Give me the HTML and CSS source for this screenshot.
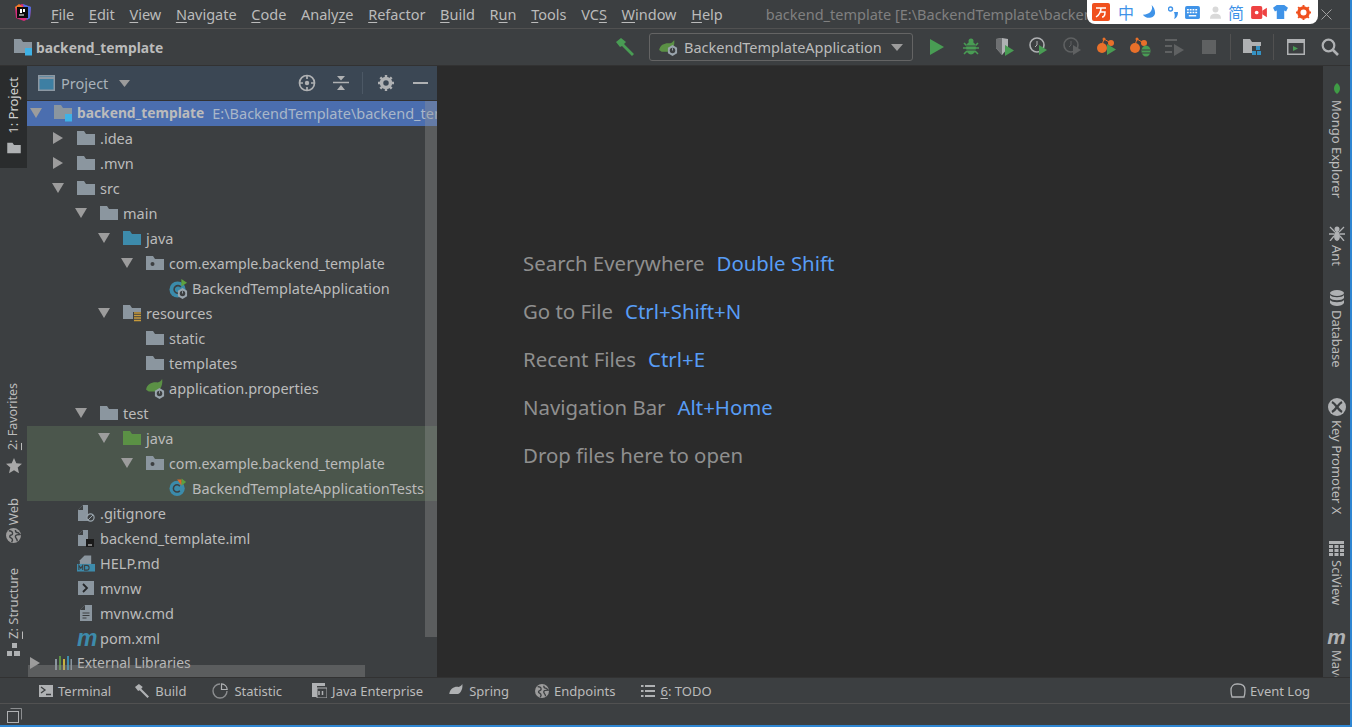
FILE: index.html
```html
<!DOCTYPE html>
<html lang="en">
<head>
<meta charset="utf-8">
<title>backend_template</title>
<link rel="stylesheet" href="styles.css">
</head>
<body>
<svg class="defs" width="0" height="0" aria-hidden="true">
  <symbol id="folder" viewBox="0 0 18 16"><path d="M0 1h7l2 3h9v11H0z" fill="#8b969f"/></symbol>
  <symbol id="proj" viewBox="0 0 18 18"><path d="M0 1h7l2 3h9v11H0z" fill="#8b969f"/><rect x="11" y="10" width="7.500" height="7.500" fill="#3fb2e6"/></symbol>
  <symbol id="src" viewBox="0 0 18 16"><path d="M0 1h7l2 3h9v11H0z" fill="#3d8bab"/></symbol>
  <symbol id="test" viewBox="0 0 18 16"><path d="M0 1h7l2 3h9v11H0z" fill="#5b9145"/></symbol>
  <symbol id="pkg" viewBox="0 0 18 16"><path d="M0 1h7l2 3h9v11H0z" fill="#8b969f"/><circle cx="6.500" cy="9" r="2" fill="#3c3f41"/></symbol>
  <symbol id="res" viewBox="0 0 18 18"><path d="M0 1h7l2 3h9v11H0z" fill="#8b969f"/><rect x="10" y="8" width="9" height="9" fill="#3c3f41"/><path d="M11 9h7M11 11.500h7M11 14h7M11 16.500h7" stroke="#c79a3b" stroke-width="1.500"/></symbol>
  <symbol id="cls" viewBox="0 0 20 20"><circle cx="9" cy="11" r="8.500" fill="#3b8bab"/><path d="M12.500 8.500a4 4 0 1 0 0 5" fill="none" stroke="#3c3f41" stroke-width="1.700"/><path d="M13 0l6 4-6 4z" fill="#5da13f"/></symbol>
  <symbol id="clsrun" viewBox="0 0 20 20"><circle cx="9" cy="11" r="8.500" fill="#3b8bab"/><path d="M12 8.500a4 4 0 1 0 0 5" fill="none" stroke="#3c3f41" stroke-width="1.700"/><path d="M9 1l5 0 0 7z" fill="#d9682a"/><path d="M14 0l5 4-5 4z" fill="#5da13f"/></symbol>
  <symbol id="gear" viewBox="0 0 12 12"><path d="M6 0l5 3v6l-5 3-5-3V3z" fill="#9aa5ad"/><circle cx="6" cy="6" r="3" fill="#3c3f41"/><path d="M6 3.500V6" stroke="#9aa5ad"/></symbol>
  <symbol id="spring" viewBox="0 0 20 18"><path d="M0 12C1 5 8 3 13 4c2-.5 3.500-1.500 5-4 1 5-1 12-6 14H3z" fill="#5b9145"/></symbol>
  <symbol id="file" viewBox="0 0 14 18"><path d="M1 6l5-5h5v16H1z" fill="#8b969f"/><path d="M6 1v5H1z" fill="#3c3f41"/></symbol>
  <symbol id="tri" viewBox="0 0 12 10"><path d="M0 0h12L6 10z" fill="#9c9c9c"/></symbol>
  <symbol id="trir" viewBox="0 0 10 12"><path d="M0 0v12l10-6z" fill="#9c9c9c"/></symbol>
  <symbol id="play" viewBox="0 0 14 16"><path d="M0 0v16l14-8z" fill="#499c54"/></symbol>
  <symbol id="bug" viewBox="0 0 16 18"><ellipse cx="8" cy="10" rx="5" ry="6.500" fill="#499c54"/><circle cx="8" cy="3" r="2.500" fill="#499c54"/><path d="M1 5l3 3M15 5l-3 3M0 10h3M16 10h-3M1 16l3-3M15 16l-3-3" stroke="#499c54" stroke-width="1.600"/><path d="M3 8h10M3 12h10" stroke="#3c3f41"/></symbol>
  <symbol id="orange" viewBox="0 0 20 20"><circle cx="5" cy="11" r="5" fill="#e8702a"/><circle cx="7" cy="2" r="1.500" fill="#e8702a"/><circle cx="14" cy="6" r="3" fill="#e8702a"/><path d="M7 2L5 8M7 2l5 3" stroke="#e8702a"/></symbol>
  <symbol id="hammer" viewBox="0 0 20 18"><path d="M1 4l5-4 5 4-2 2 10 10-2 2L7 8 5 9z" fill="currentColor"/></symbol>
  <symbol id="globe" viewBox="0 0 16 16"><circle cx="8" cy="8" r="8" fill="#9c9c9c"/><path d="M3 3c3 0 4 1 4 3S4 7 4 9s3 1 3 4l-1 2M10 2c0 2 1 3 3 3l2 2c-3 0-5 0-5 2s2 2 2 5" fill="none" stroke="#3c3f41" stroke-width="1.500"/></symbol>
  <symbol id="star" viewBox="0 0 16 16"><path d="M8 0l2.300 5.300 5.700.5-4.300 3.800 1.300 5.700L8 12.300 3 15.300l1.300-5.700L0 5.800l5.700-.5z" fill="#a8a8a8"/></symbol>
</svg>

<div class="window">
  <header class="menubar">
    <svg class="logo" width="17" height="17" viewBox="0 0 17 17"><path d="M1 3L8 0l9 3-1 11-6 3-8-3z" fill="#d82c7c"/><path d="M9 0l8 3-1 11-3 2z" fill="#4a6fe0"/><path d="M1 3l4-3 4 3-5 5z" fill="#f07a2a"/><rect x="3" y="3" width="11" height="11" fill="#0c0c0c"/><path d="M5 11h5" stroke="#fff"/><path d="M6 5h2v4H6zM9 5h2v3H9z" fill="#fff"/></svg>
    <nav class="menu">
      <span><u>F</u>ile</span><span><u>E</u>dit</span><span><u>V</u>iew</span><span><u>N</u>avigate</span><span><u>C</u>ode</span><span>Analy<u>z</u>e</span><span><u>R</u>efactor</span><span><u>B</u>uild</span><span>R<u>u</u>n</span><span><u>T</u>ools</span><span>VC<u>S</u></span><span><u>W</u>indow</span><span><u>H</u>elp</span>
    </nav>
    <span class="wintitle">backend_template [E:\BackendTemplate\backend_template] - IntelliJ IDEA</span>
    <svg class="closex" width="11" height="11" viewBox="0 0 11 11"><path d="M.5.500l10 10M10.500.500l-10 10" stroke="#a0a0a0"/></svg>
  </header>

  <div class="ime">
    <svg width="18" height="18" viewBox="0 0 18 18"><rect width="18" height="18" rx="2" fill="#f0501e"/><path d="M4 5h10M9 5c0 4-2 7-5 9M8 9h5c0 3-1 5-3 5" fill="none" stroke="#fff" stroke-width="1.500"/></svg>
    <span class="ime-ch zh">中</span>
    <svg class="i-moon" width="14" height="14" viewBox="0 0 16 16"><path d="M11 0c2 6-2 11-10 11 3 5 13 5 14-2 0-4-2-7-4-9z" fill="#3f93e8"/></svg>
    <svg class="i-dot" width="10" height="13" viewBox="0 0 10 13"><circle cx="2.500" cy="3" r="2" fill="none" stroke="#3f93e8" stroke-width="1.400"/><path d="M6 6h4c0 3-1 6-4 7 1-2 1-4 0-7z" fill="#3f93e8"/></svg>
    <svg class="i-kb" width="15" height="13" viewBox="0 0 16 14"><rect width="16" height="14" rx="2" fill="#3f93e8"/><path d="M2 4h12M2 7h12" stroke="#fff" stroke-width="1.500" stroke-dasharray="2 1"/><path d="M4 10.500h8" stroke="#fff" stroke-width="1.500"/></svg>
    <svg class="i-usr" width="11" height="13" viewBox="0 0 13 15"><circle cx="6.500" cy="4" r="3.500" fill="#d9d9d9"/><path d="M0 15c0-5 3-6 6.500-6s6.500 1 6.500 6z" fill="#d9d9d9"/></svg>
    <span class="ime-ch jian">简</span>
    <svg class="i-vid" width="16" height="13" viewBox="0 0 17 14"><rect width="12" height="14" rx="2" fill="#ee4242"/><path d="M12 5l5-3v10l-5-3z" fill="#ee4242"/><circle cx="6" cy="7" r="2" fill="#fff"/></svg>
    <svg class="i-shirt" width="15" height="14" viewBox="0 0 16 15"><path d="M4 0h8l4 3-2 4-2-1v9H4V6L2 7 0 3z" fill="#3f93e8"/></svg>
    <svg class="i-gear" width="15" height="15" viewBox="0 0 16 16"><circle cx="8" cy="8" r="5" fill="none" stroke="#f0501e" stroke-width="3.500"/><path d="M8 0v3M8 13v3M0 8h3M13 8h3M2.300 2.300l2 2M11.700 11.700l2 2M13.700 2.300l-2 2M4.300 11.700l-2 2" stroke="#f0501e" stroke-width="2"/></svg>
  </div>

  <div class="navbar">
    <div class="crumb">
      <svg class="ic18" width="18" height="18"><use href="#proj"/></svg>
      <b>backend_template</b>
    </div>
    <div class="tools">
      <svg class="hammer" width="20" height="18"><use href="#hammer"/></svg>
      <div class="combo">
        <span class="combo-ic"><svg width="17" height="15"><use href="#spring"/></svg><svg class="combo-gear" width="11" height="11"><use href="#gear"/></svg></span>
        <span class="combo-t">BackendTemplateApplication</span>
        <svg class="combo-a" width="12" height="7" viewBox="0 0 12 10" preserveAspectRatio="none"><use href="#tri"/></svg>
      </div>
      <span class="tb"><svg width="14" height="16"><use href="#play"/></svg></span>
      <span class="tb"><svg width="16" height="18"><use href="#bug"/></svg></span>
      <span class="tb"><svg width="20" height="18" viewBox="0 0 20 18"><path d="M1 1l6-1 6 1v9l-6 7-6-7z" fill="#afb1b3"/><path d="M7 0v17l-6-7V1z" fill="#6e7072"/><path d="M10 7v11l9-5.500z" fill="#499c54"/></svg></span>
      <span class="tb"><svg width="20" height="20" viewBox="0 0 20 20"><circle cx="8" cy="8" r="7" fill="none" stroke="#afb1b3" stroke-width="1.600"/><path d="M8 4v4l-2 2" fill="none" stroke="#afb1b3"/><path d="M10 8v10l8-5z" fill="#499c54"/></svg></span>
      <span class="tb"><svg width="20" height="20" viewBox="0 0 20 20"><circle cx="8" cy="8" r="7" fill="none" stroke="#5f6162" stroke-width="1.600"/><path d="M8 4v4l-2 2" fill="none" stroke="#5f6162"/><path d="M10 8v10l8-5z" fill="#5f6162"/></svg></span>
      <span class="tb"><svg width="20" height="20" viewBox="0 0 20 20"><use href="#orange"/><path d="M10 7v11l9-5.500z" fill="#499c54"/></svg></span>
      <span class="tb"><svg width="22" height="20" viewBox="0 0 22 20"><use href="#orange" width="20" height="20"/><ellipse cx="16" cy="14" rx="4.500" ry="5.500" fill="#499c54"/><path d="M12 13h8M12 16h8" stroke="#3c3f41"/></svg></span>
      <span class="tb"><svg width="20" height="18" viewBox="0 0 20 18"><path d="M0 2h12M0 8h7M0 14h7" stroke="#5f6162" stroke-width="2"/><path d="M9 6v12l10-6z" fill="#5f6162"/></svg></span>
      <span class="tb"><span class="stop"></span></span>
      <span class="sep sep1"></span>
      <span class="tb2"><svg width="18" height="18" viewBox="0 0 18 18"><path d="M0 1h7l2 3h9v11H0z" fill="#afb1b3"/><rect x="9" y="8" width="10" height="10" fill="#3c3f41"/><rect x="13" y="8" width="4" height="4" fill="#3592c4"/><rect x="9" y="13" width="4" height="4" fill="#3592c4"/><rect x="14" y="13" width="4" height="4" fill="#3592c4"/></svg></span>
      <span class="sep sep2"></span>
      <span class="tb3"><svg width="18" height="16" viewBox="0 0 18 16"><path d="M.750.750h16.500v14.500H.750z" fill="none" stroke="#afb1b3" stroke-width="1.500"/><path d="M1 1h16v3H1z" fill="#afb1b3"/><path d="M6 7v5l5-2.500z" fill="#499c54"/></svg></span>
      <span class="tb3"><svg width="18" height="18" viewBox="0 0 18 18"><circle cx="7.500" cy="7.500" r="5.800" fill="none" stroke="#afb1b3" stroke-width="2.200"/><path d="M11.500 11.500l5.500 5.500" stroke="#afb1b3" stroke-width="2.600"/></svg></span>
    </div>
  </div>

  <div class="main">
    <aside class="stripe-l">
      <div class="sl-active">
        <span class="vt-up">1: Project</span>
        <svg width="14" height="12" viewBox="0 0 18 16"><path d="M0 1h7l2 3h9v11H0z" fill="#afb1b3"/></svg>
      </div>
      <div class="sl fav"><span class="vt-up"><u>2</u>: Favorites</span><svg width="16" height="16"><use href="#star"/></svg></div>
      <div class="sl web"><span class="vt-up">Web</span><svg width="15" height="15" viewBox="0 0 16 16"><use href="#globe"/></svg></div>
      <div class="sl str"><span class="vt-up"><u>Z</u>: Structure</span><svg width="14" height="14" viewBox="0 0 14 14"><path d="M5 0h5v5H5zM0 8h5v5H0zM7 8h6v5H7z" fill="#afb1b3"/></svg></div>
    </aside>

    <section class="project">
      <div class="phead">
        <svg class="pwin" width="17" height="16" viewBox="0 0 17 16"><rect x=".75" y=".75" width="15.500" height="14.500" fill="#3d7fa3" stroke="#8c98a3" stroke-width="1.500"/><path d="M1 3h15" stroke="#8c98a3" stroke-width="2"/></svg>
        <span class="ptitle">Project</span>
        <svg class="parrow" width="11" height="7" viewBox="0 0 12 10" preserveAspectRatio="none"><use href="#tri"/></svg>
        <div class="pacts">
          <svg width="18" height="18" viewBox="0 0 18 18"><circle cx="9" cy="9" r="7.500" fill="none" stroke="#afb1b3" stroke-width="1.700"/><circle cx="9" cy="9" r="2.200" fill="#afb1b3"/><path d="M9 1v4M9 13v4M1 9h4M13 9h4" stroke="#afb1b3" stroke-width="1.700"/></svg>
          <svg class="pa2" width="16" height="16" viewBox="0 0 16 16"><path d="M0 7.500h16" stroke="#afb1b3" stroke-width="1.500"/><path d="M4 1h8L8 5.500zM4 15h8l-4-5z" fill="#afb1b3"/></svg>
          <span class="psep"></span>
          <svg class="pa3" width="16" height="16" viewBox="0 0 16 16"><circle cx="8" cy="8" r="4.500" fill="none" stroke="#afb1b3" stroke-width="3.500"/><path d="M8 0v3M8 13v3M0 8h3M13 8h3M2.300 2.300l2 2M11.700 11.700l2 2M13.700 2.300l-2 2M4.300 11.700l-2 2" stroke="#afb1b3" stroke-width="2.400"/></svg>
          <span class="pmin"></span>
        </div>
      </div>

      <div class="tree">
        <div class="row sel l0"><svg class="ar" width="12" height="10"><use href="#tri"/></svg><svg class="ic" width="18" height="18"><use href="#proj"/></svg><b>backend_template</b><span class="path">E:\BackendTemplate\backend_template</span></div>
        <div class="row l1"><svg class="arr" width="10" height="12"><use href="#trir"/></svg><svg class="ic" width="18" height="16"><use href="#folder"/></svg><span>.idea</span></div>
        <div class="row l1"><svg class="arr" width="10" height="12"><use href="#trir"/></svg><svg class="ic" width="18" height="16"><use href="#folder"/></svg><span>.mvn</span></div>
        <div class="row l1"><svg class="ar" width="12" height="10"><use href="#tri"/></svg><svg class="ic" width="18" height="16"><use href="#folder"/></svg><span>src</span></div>
        <div class="row l2"><svg class="ar" width="12" height="10"><use href="#tri"/></svg><svg class="ic" width="18" height="16"><use href="#folder"/></svg><span>main</span></div>
        <div class="row l3"><svg class="ar" width="12" height="10"><use href="#tri"/></svg><svg class="ic" width="18" height="16"><use href="#src"/></svg><span>java</span></div>
        <div class="row l4"><svg class="ar" width="12" height="10"><use href="#tri"/></svg><svg class="ic" width="18" height="16"><use href="#pkg"/></svg><span class="pk">com.example.backend_template</span></div>
        <div class="row l5"><span class="ic stack"><svg width="19" height="19"><use href="#cls"/></svg><svg class="bgear" width="11" height="11"><use href="#gear"/></svg></span><span>BackendTemplateApplication</span></div>
        <div class="row l3"><svg class="ar" width="12" height="10"><use href="#tri"/></svg><svg class="ic" width="18" height="18"><use href="#res"/></svg><span>resources</span></div>
        <div class="row l4n"><svg class="ic" width="18" height="16"><use href="#folder"/></svg><span>static</span></div>
        <div class="row l4n"><svg class="ic" width="18" height="16"><use href="#folder"/></svg><span>templates</span></div>
        <div class="row l4n"><span class="ic stack"><svg width="18" height="16"><use href="#spring"/></svg><svg class="bgear" width="11" height="11"><use href="#gear"/></svg></span><span>application.properties</span></div>
        <div class="row l2"><svg class="ar" width="12" height="10"><use href="#tri"/></svg><svg class="ic" width="18" height="16"><use href="#folder"/></svg><span>test</span></div>
        <div class="row l3 tst"><svg class="ar" width="12" height="10"><use href="#tri"/></svg><svg class="ic" width="18" height="16"><use href="#test"/></svg><span>java</span></div>
        <div class="row l4 tst"><svg class="ar" width="12" height="10"><use href="#tri"/></svg><svg class="ic" width="18" height="16"><use href="#pkg"/></svg><span class="pk">com.example.backend_template</span></div>
        <div class="row l5 tst"><svg class="ic" width="19" height="19"><use href="#clsrun"/></svg><span>BackendTemplateApplicationTests</span></div>
        <div class="row l2f"><span class="ic stack"><svg width="14" height="18"><use href="#file"/></svg><svg class="bno" width="9" height="9" viewBox="0 0 9 9"><circle cx="4.500" cy="4.500" r="3.600" fill="#3c3f41" stroke="#9aa5ad" stroke-width="1.200"/><path d="M2 7l5-5" stroke="#9aa5ad"/></svg></span><span>.gitignore</span></div>
        <div class="row l2f"><span class="ic stack"><svg width="14" height="18"><use href="#file"/></svg><svg class="bim" width="8" height="8" viewBox="0 0 8 8"><rect width="8" height="8" fill="#1a1a1a"/><path d="M2 6h4" stroke="#ddd"/></svg></span><span>backend_template.iml</span></div>
        <div class="row l2f"><svg class="ic" width="19" height="18" viewBox="0 0 19 18"><path d="M3 6l5-5h7v9H3z" fill="#8b969f"/><rect y="10" width="19" height="8" fill="#3d8bab"/><path d="M2 16.500v-5l2 3 2-3v5M8 11.500v5h2.500c3 0 3-5 0-5z" fill="none" stroke="#3c3f41" stroke-width="1.100"/></svg><span>HELP.md</span></div>
        <div class="row l2f"><svg class="ic" width="16" height="14" viewBox="0 0 16 14"><rect width="16" height="14" fill="#8b969f"/><path d="M5 3l4 4-4 4" fill="none" stroke="#26282a" stroke-width="1.800"/></svg><span>mvnw</span></div>
        <div class="row l2f"><svg class="ic" width="14" height="18" viewBox="0 0 14 18"><path d="M1 6l5-5h7v16H1z" fill="#8b969f"/><path d="M6 1v5H1z" fill="#3c3f41"/><path d="M3.500 9h7M3.500 11.500h7M3.500 14h4" stroke="#3c3f41"/></svg><span>mvnw.cmd</span></div>
        <div class="row l2f"><span class="ic mvn">m</span><span>pom.xml</span></div>
        <div class="row l0"><svg class="arr0" width="10" height="12"><use href="#trir"/></svg><svg class="ic" width="18" height="14" viewBox="0 0 18 14"><path d="M1 3h2v11H1z" fill="#8b969f"/><path d="M5 0h2v14H5z" fill="#5b9145"/><path d="M9 3h2v11H9z" fill="#c7b23f"/><path d="M13 0h2v14h-2z" fill="#3d8bab"/><path d="M16.500 3h1.500v11h-1.500z" fill="#8b969f"/></svg><span class="ext">External Libraries</span></div>
      </div>
      <div class="vthumb"></div>
      <div class="hthumb"></div>
    </section>

    <main class="editor">
      <p>Search Everywhere<em>Double Shift</em></p>
      <p>Go to File<em>Ctrl+Shift+N</em></p>
      <p>Recent Files<em>Ctrl+E</em></p>
      <p>Navigation Bar<em>Alt+Home</em></p>
      <p>Drop files here to open</p>
    </main>

    <aside class="stripe-r">
      <div class="sr mongo"><svg width="8" height="11" viewBox="0 0 8 11"><path d="M4 0c4 3 4 8 0 11C0 8 0 3 4 0z" fill="#3f9c45"/></svg><span>Mongo Explorer</span></div>
      <div class="sr ant"><svg width="16" height="15" viewBox="0 0 16 15"><circle cx="8" cy="3" r="2.500" fill="#afb1b3"/><ellipse cx="8" cy="10" rx="3" ry="5" fill="#afb1b3"/><path d="M1 1l5 5M15 1l-5 5M0 8h5M16 8h-5M1 15l4-5M15 15l-4-5" stroke="#afb1b3" stroke-width="1.300"/></svg><span>Ant</span></div>
      <div class="sr db"><svg width="14" height="16" viewBox="0 0 14 16"><ellipse cx="7" cy="3" rx="7" ry="3" fill="#afb1b3"/><path d="M0 5c2 3 12 3 14 0v3c-2 3-12 3-14 0zM0 10c2 3 12 3 14 0v3c-2 4-12 4-14 0z" fill="#afb1b3"/></svg><span>Database</span></div>
      <div class="sr kpx"><svg width="18" height="18" viewBox="0 0 18 18"><circle cx="9" cy="9" r="9" fill="#afb1b3"/><path d="M4 4c4 2 6 8 10 10M14 4c-4 2-6 8-10 10" fill="none" stroke="#3c3f41" stroke-width="2.400"/></svg><span>Key Promoter X</span></div>
      <div class="sr sci"><svg width="15" height="15" viewBox="0 0 15 15"><path d="M0 0h15v3H0zM0 4h4v3H0zM5.500 4h4v3h-4zM11 4h4v3h-4zM0 8h4v3H0zM5.500 8h4v3h-4zM11 8h4v3h-4zM0 12h4v3H0zM5.500 12h4v3h-4zM11 12h4v3h-4z" fill="#afb1b3"/></svg><span>SciView</span></div>
      <div class="sr mav"><i>m</i><span>Maven</span></div>
    </aside>
  </div>

  <footer class="bottom">
    <span class="bt b-term"><svg width="14" height="12" viewBox="0 0 14 12"><rect width="14" height="12" fill="#afb1b3"/><path d="M2 2l4 3-4 3M7 9.500h5" fill="none" stroke="#3c3f41" stroke-width="1.300"/></svg>Terminal</span>
    <span class="bt"><svg class="bham" width="16" height="14"><use href="#hammer"/></svg>Build</span>
    <span class="bt b-stat"><svg width="16" height="16" viewBox="0 0 16 16"><path d="M8 1a7 7 0 1 0 7 7" fill="none" stroke="#8c8e90" stroke-width="1.400"/><path d="M9.500.800a6 6 0 0 1 5.700 5.700H9.500z" fill="none" stroke="#afb1b3" stroke-width="1.200"/></svg>Statistic</span>
    <span class="bt"><svg width="15" height="15" viewBox="0 0 15 15"><path d="M0 0h13v3H0zM0 3h5v11H0z" fill="#afb1b3"/><rect x="5" y="5" width="10" height="10" fill="#3c3f41" stroke="#afb1b3"/><path d="M7 8v4M10.500 8v4" stroke="#afb1b3" stroke-width="1.500"/></svg>Java Enterprise</span>
    <span class="bt"><svg width="15" height="13" viewBox="0 0 20 18"><path d="M0 14C1 5 8 3 13 4c2-.5 3.500-1.500 5-4 1 5-1 12-6 14H3z" fill="#afb1b3"/></svg>Spring</span>
    <span class="bt"><svg width="14" height="14" viewBox="0 0 16 16"><use href="#globe"/></svg>Endpoints</span>
    <span class="bt"><svg width="14" height="12" viewBox="0 0 14 12"><path d="M0 1h2.500M4 1h10M0 6h2.500M4 6h10M0 11h2.500M4 11h10" stroke="#afb1b3" stroke-width="2"/></svg><span><u>6</u>: TODO</span></span>
    <span class="bt evlog"><svg width="16" height="15" viewBox="0 0 16 15"><path d="M8 1c5 0 7 3 7 6 0 4-1 7-1 7H2s-1-3-1-7c0-3 2-6 6-6z" fill="none" stroke="#afb1b3" stroke-width="1.300"/></svg>Event Log</span>
  </footer>

  <div class="status">
    <svg width="15" height="15" viewBox="0 0 15 15"><path d="M3.500.500h11v11" fill="none" stroke="#8c8e90"/><rect x=".500" y="3.500" width="11" height="11" fill="none" stroke="#afb1b3"/></svg>
  </div>
</div>
</body>
</html>
```
FILE: styles.css
```css
* { box-sizing: border-box; }
html, body { margin: 0; height: 100%; overflow: hidden; }
body { background: #3c3f41; font-family: "Noto Sans", "Open Sans", sans-serif; color: #bbbbbb; }
.defs { position: absolute; }
svg { display: block; flex: none; }
u { text-underline-offset: 2px; }

.window { position: relative; width: 1352px; height: 727px; display: flex; flex-direction: column; border-right: 2px solid #2f86d2; border-bottom: 2px solid #2f86d2; overflow: hidden; }

.menubar { height: 29px; flex: none; display: flex; align-items: center; padding-left: 14px; font-size: 14.500px; border-bottom: 1px solid #515151; white-space: nowrap; position: relative; }
.logo { margin-top: -4px; }
.menu { display: flex; gap: 14.670px; margin-left: 20px; }
.wintitle { margin-left: 43px; color: #808080; }
.closex { position: absolute; right: 18px; top: 9px; }

.ime { position: absolute; left: 1087px; top: 0; width: 231px; height: 24px; background: #fff; border-radius: 0 0 8px 8px; display: flex; align-items: center; padding-left: 5px; }
.ime-ch { color: #3f93e8; font-size: 16px; font-family: "Noto Sans CJK SC", sans-serif; line-height: 16px; }
.zh { margin-left: 8px; }
.i-moon { margin-left: 8px; }
.i-dot { margin-left: 12px; }
.i-kb { margin-left: 7px; }
.i-usr { margin-left: 10px; }
.jian { margin-left: 7px; }
.i-vid { margin-left: 7px; }
.i-shirt { margin-left: 6px; }
.i-gear { margin-left: 8px; }

.navbar { height: 37px; flex: none; display: flex; align-items: center; padding-left: 14px; border-bottom: 1px solid #323232; }
.crumb { display: flex; align-items: center; gap: 4px; font-size: 13.800px; }
.crumb b { font-weight: 700; color: #bbbbbb; }
.tools { margin-left: auto; display: flex; align-items: center; padding-right: 3px; }
.hammer { color: #499c54; margin-right: 14px; }
.combo { width: 264px; height: 28px; border: 1px solid #646464; border-radius: 3px; display: flex; align-items: center; padding-left: 9px; margin-right: 7px; font-size: 14.500px; }
.combo-ic { position: relative; width: 25px; height: 15px; }
.combo-gear { position: absolute; left: 8px; top: 5px; }
.combo-a { margin-left: auto; margin-right: 9px; }
.tb { width: 34px; display: flex; justify-content: center; }
.tb2 { width: 42px; display: flex; justify-content: center; }
.tb3 { width: 34px; display: flex; justify-content: center; }
.stop { width: 14px; height: 14px; background: #5f6162; }
.sep { width: 1px; height: 26px; background: #515151; }
.sep1 { margin-left: 4px; }
.sep2 { margin-right: 5px; }

.main { flex: 1; min-height: 0; display: flex; }

.stripe-l { width: 27px; flex: none; display: flex; flex-direction: column; align-items: center; font-size: 13px; background: #3c3f41; }
.vt-up { writing-mode: vertical-rl; transform: rotate(180deg); white-space: nowrap; margin-right: 2px; }
.sl-active { width: 27px; height: 102px; background: #2a2c2d; color: #d0d0d0; display: flex; flex-direction: column; align-items: center; gap: 8px; padding-top: 11px; }
.sl { display: flex; flex-direction: column; align-items: center; gap: 8px; }
.fav { margin-top: 215px; }
.fav .vt-up { font-size: 12.500px; }
.web { margin-top: 24px; gap: 3px; }
.str { margin-top: 25px; gap: 4px; }

.project { width: 410px; flex: none; position: relative; overflow: hidden; background: #3c3f41; }
.phead { height: 35px; background: #3b4754; border-bottom: 1px solid #323232; display: flex; align-items: center; padding-left: 11px; font-size: 14.500px; }
.pwin { margin-right: 6px; }
.ptitle { color: #a9b2ba; }
.parrow { margin-left: 11px; }
.pacts { margin-left: auto; display: flex; align-items: center; padding-right: 9px; }
.pa2 { margin-left: 17px; }
.psep { width: 1px; height: 22px; background: #4c5865; margin-left: 13px; }
.pa3 { margin-left: 15px; }
.pmin { width: 15px; height: 2px; background: #afb1b3; margin-left: 19px; }

.tree { font-size: 14.500px; white-space: nowrap; }
.row { height: 25px; display: flex; align-items: center; position: relative; padding-bottom: 2px; }
.row b { font-size: 13.800px; }
.pk { font-size: 14.200px; padding-top: 2px; }
.ext { font-size: 13.900px; }
.ar { margin-right: 13px; }
.l0 .ar { margin-right: 12px; }
.arr { margin-right: 14px; margin-left: 1px; }
.arr0 { margin-right: 14px; }
.ic { margin-right: 5px; width: 18px; }
.stack { position: relative; height: 18px; display: block; }
.bgear { position: absolute; left: 8px; top: 9px; }
.bno { position: absolute; left: 9px; top: 9px; }
.bim { position: absolute; left: 9px; top: 10px; }
.mvn { color: #3d8bab; font: italic 700 23px/18px "Liberation Sans", sans-serif; }
.sel { background: #4b6eaf; }
.sel b { color: #bbbbbb; }
.path { margin-left: 8px; color: #a9b7c9; }
.tst { background: #4b564c; }
.l0 { padding-left: 3px; }
.l1 { padding-left: 25px; }
.l2 { padding-left: 48px; }
.l3 { padding-left: 71px; }
.l4 { padding-left: 94px; }
.l5 { padding-left: 142px; }
.l4n { padding-left: 119px; }
.l2f { padding-left: 50px; }
.vthumb { position: absolute; right: 0; top: 35px; width: 12px; height: 536px; background: rgba(150, 150, 150, .35); }
.hthumb { position: absolute; left: 1px; bottom: 0; width: 337px; height: 12px; background: rgba(150, 150, 150, .35); }

.editor { flex: 1; background: #2b2b2b; padding: 183px 0 0 86px; font-size: 20.400px; color: #8f8f8f; }
.editor p { margin: 0 0 20px; line-height: 28px; white-space: nowrap; }
.editor em { font-style: normal; color: #589df6; margin-left: 12px; }

.stripe-r { width: 27px; flex: none; font-size: 13px; background: #3c3f41; display: flex; flex-direction: column; align-items: center; overflow: hidden; }
.stripe-r span { writing-mode: vertical-rl; white-space: nowrap; }
.sr { display: flex; flex-direction: column; align-items: center; gap: 4px; flex: none; }
.mongo { margin-top: 17px; gap: 6px; }
.ant { margin-top: 28px; }
.db { margin-top: 24px; }
.kpx { margin-top: 30px; }
.sci { margin-top: 27px; }
.mav { margin-top: 24px; gap: 5px; }
.mav i { font: italic 700 21px/16px "Liberation Sans", sans-serif; color: #afb1b3; }

.bottom { height: 27px; flex: none; display: flex; align-items: center; padding-left: 39px; gap: 26px; font-size: 13px; border-top: 1px solid #323232; border-bottom: 1px solid #515151; padding-right: 40px; }
.bt { display: flex; align-items: center; gap: 5px; white-space: nowrap; }
.b-term { margin-right: -3px; }
.b-stat { margin-right: 4px; gap: 6px; }
.bham { color: #afb1b3; }
.evlog { margin-left: auto; gap: 4px; }
.status { height: 21px; flex: none; padding: 4px 0 0 7px; }
```
